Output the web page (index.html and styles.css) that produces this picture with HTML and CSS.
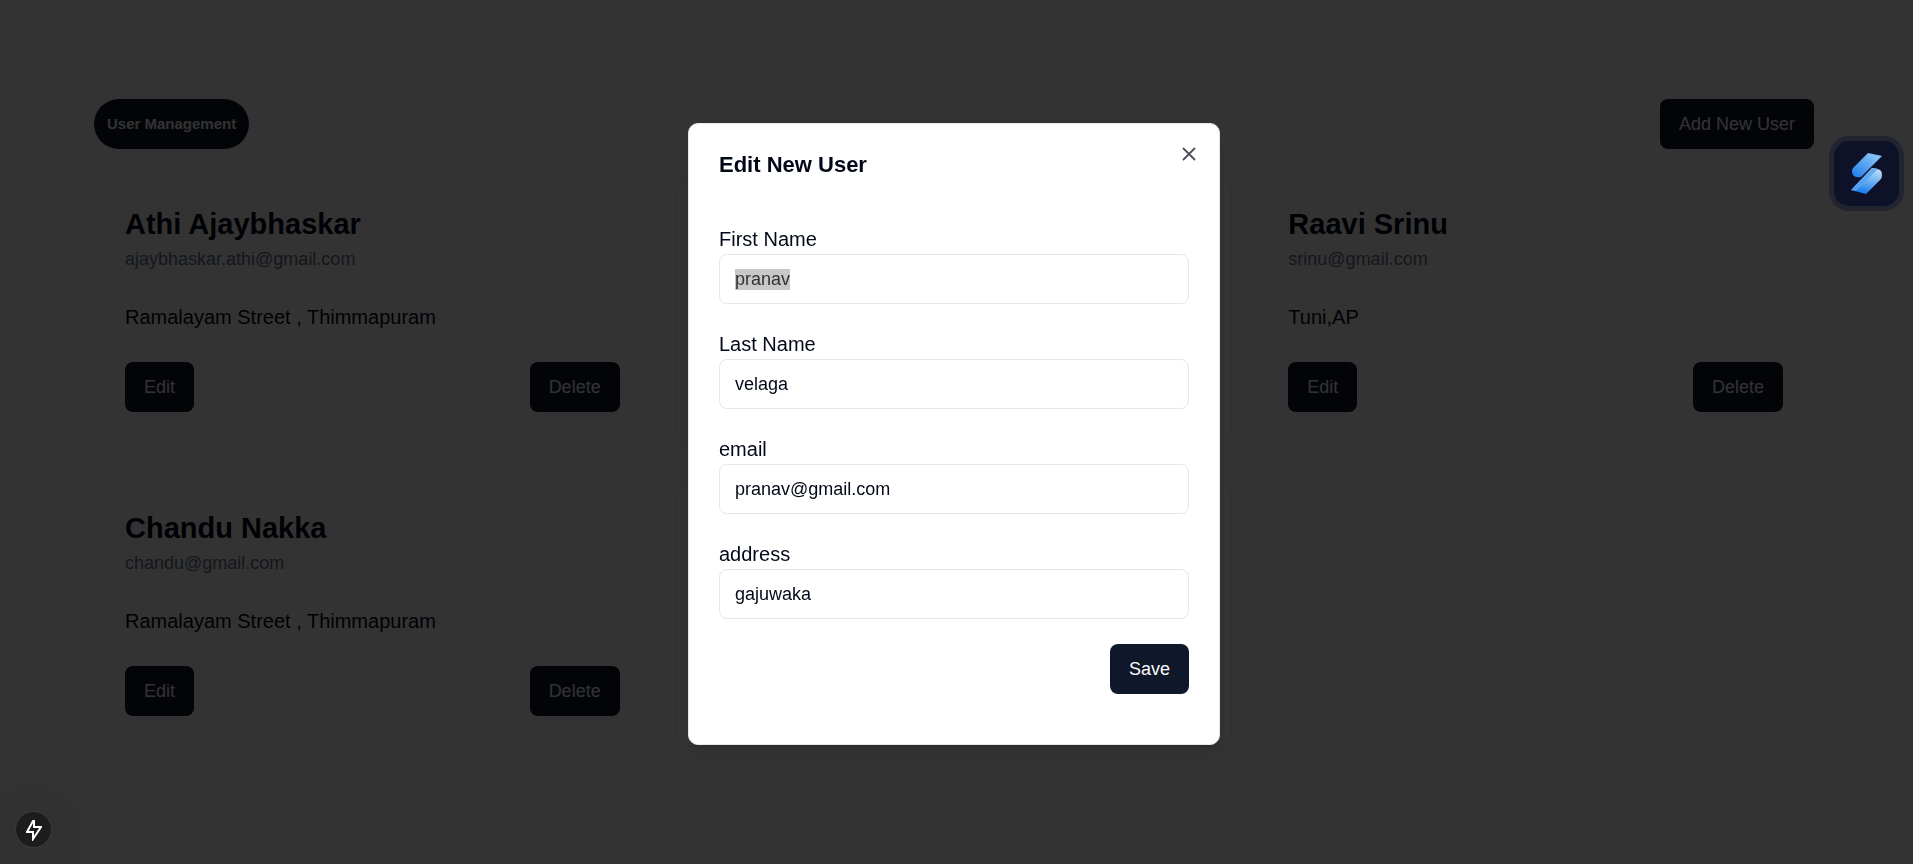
FILE: index.html
```html
<!DOCTYPE html>
<html lang="en">
<head>
<meta charset="utf-8">
<meta name="viewport" content="width=device-width, initial-scale=1">
<title>User Management</title>
<link rel="stylesheet" href="styles.css">
</head>
<body>
<main class="page">
  <header class="page-header">
    <h1 class="badge">User Management</h1>
    <button class="button" type="button">Add New User</button>
  </header>
  <section class="cards">
    <article class="card">
      <h2 class="card-title">Athi Ajaybhaskar</h2>
      <p class="card-email">ajaybhaskar.athi@gmail.com</p>
      <p class="card-address">Ramalayam Street , Thimmapuram</p>
      <div class="card-actions"><button class="button" type="button">Edit</button><button class="button" type="button">Delete</button></div>
    </article>
    <article class="card"></article>
    <article class="card">
      <h2 class="card-title">Raavi Srinu</h2>
      <p class="card-email">srinu@gmail.com</p>
      <p class="card-address">Tuni,AP</p>
      <div class="card-actions"><button class="button" type="button">Edit</button><button class="button" type="button">Delete</button></div>
    </article>
    <article class="card">
      <h2 class="card-title">Chandu Nakka</h2>
      <p class="card-email">chandu@gmail.com</p>
      <p class="card-address">Ramalayam Street , Thimmapuram</p>
      <div class="card-actions"><button class="button" type="button">Edit</button><button class="button" type="button">Delete</button></div>
    </article>
    <article class="card"></article>
  </section>
</main>

<div class="overlay">
  <form class="dialog" role="dialog" aria-modal="true" aria-labelledby="dialog-title">
    <button class="dialog-close" type="button" aria-label="Close">
      <svg viewBox="0 0 24 24" width="22" height="22" fill="none" stroke="currentColor" stroke-width="2" stroke-linecap="round" stroke-linejoin="round"><path d="M18 6 6 18M6 6l12 12"/></svg>
    </button>
    <h2 class="dialog-title" id="dialog-title">Edit New User</h2>
    <div class="fields">
      <div class="field"><label for="first-name">First Name</label><input id="first-name" type="text" value="pranav"></div>
      <div class="field"><label for="last-name">Last Name</label><input id="last-name" type="text" value="velaga"></div>
      <div class="field"><label for="email">email</label><input id="email" type="text" value="pranav@gmail.com"></div>
      <div class="field"><label for="address">address</label><input id="address" type="text" value="gajuwaka"></div>
    </div>
    <div class="dialog-footer"><button class="button" type="submit">Save</button></div>
  </form>
</div>

<button class="assistant" type="button" aria-label="Open assistant">
  <svg viewBox="0 0 32 42" width="32" height="42">
    <defs>
      <linearGradient id="top" x1="1" y1="0" x2="0" y2="1"><stop offset="0" stop-color="#9bd0fb"/><stop offset="1" stop-color="#1b7bea"/></linearGradient>
      <linearGradient id="bottom" x1="0.8" y1="0" x2="0.5" y2="1"><stop offset="0" stop-color="#c5e4fc"/><stop offset="1" stop-color="#187cec"/></linearGradient>
      <linearGradient id="fold" x1="1" y1="0" x2="0" y2="1"><stop offset="0" stop-color="#6fb2f2"/><stop offset="1" stop-color="#4b98ee"/></linearGradient>
    </defs>
    <path fill="url(#top)" d="M17 0 31 3 10 24Q4 25 2 22 0 18 2 15Z"/>
    <path fill="url(#bottom)" d="M21 15Q29 16 30 18 32 22 30 26L15 41 0 37Z"/>
    <path fill="url(#fold)" d="M21 15 27 16 5 38 0 37Z"/>
  </svg>
</button>

<button class="devtools" type="button" aria-label="Open developer tools">
  <svg viewBox="0 0 16 22" width="16" height="22" fill="none" stroke="#fff" stroke-width="2"><path d="M7 2 1 13H7V20L15 8H8V2Z"/></svg>
</button>
<script src="script.js"></script>
</body>
</html>
```
FILE: styles.css
```css
* { box-sizing: border-box; }

body {
  margin: 0;
  padding-right: 5px;
  min-height: 100vh;
  background: #fff;
  color: #020817;
  font-family: "Liberation Sans", Arial, sans-serif;
  font-size: 20px;
  line-height: 30px;
}

h1, h2, p { margin: 0; }

button, input { font: inherit; }

.page { padding: 99px 94px 0; }

.page-header {
  display: flex;
  justify-content: space-between;
  align-items: center;
  margin-bottom: 30px;
}

.badge {
  padding: 10px 13px;
  border-radius: 25px;
  background: #0f172a;
  color: #f8fafc;
  font-size: 15px;
}

.button {
  height: 50px;
  padding: 0 19px;
  border: 0;
  border-radius: 8px;
  background: #0f172a;
  color: #f8fafc;
  font-size: 18px;
}

.cards {
  display: grid;
  grid-template-columns: repeat(3, 1fr);
  gap: 40px 25px;
}

.card {
  padding: 29px 30px 30px;
  border: 1px solid #e2e8f0;
  border-radius: 10px;
}

.card-title { font-size: 29px; }

.card-email {
  margin-top: 8px;
  color: #64748b;
  font-size: 18px;
  line-height: 25px;
}

.card-address { margin: 30px 0; }

.card-actions {
  display: flex;
  justify-content: space-between;
}

.overlay {
  position: fixed;
  inset: 0;
  display: flex;
  align-items: center;
  justify-content: center;
  padding: 4px 5px 0 0;
  background: rgba(0, 0, 0, 0.8);
}

.dialog {
  position: relative;
  width: 100%;
  max-width: 532px;
  padding: 29px 30px 50px;
  border: 1px solid #e2e8f0;
  border-radius: 10px;
  background: #fff;
  box-shadow: 0 12px 19px -4px rgba(0, 0, 0, 0.1), 0 5px 8px -5px rgba(0, 0, 0, 0.1);
}

.dialog-title {
  font-size: 22px;
  line-height: 23px;
}

.dialog-close {
  position: absolute;
  top: 19px;
  right: 19px;
  display: flex;
  padding: 0;
  border: 0;
  background: none;
  color: #020817;
  opacity: 0.7;
}

.fields {
  display: grid;
  gap: 25px;
  margin: 48px 0 25px;
}

.field { display: grid; }

.field input {
  width: 100%;
  height: 50px;
  padding: 0 15px;
  border: 1px solid #e2e8f0;
  border-radius: 8px;
  outline: 0;
  background: #fff;
  color: #020817;
  font-size: 18px;
}

.field input::selection {
  background: #c8c8c8;
  color: #323232;
}

.dialog-footer {
  display: flex;
  justify-content: flex-end;
}

.assistant {
  position: fixed;
  top: 136px;
  right: 9px;
  display: grid;
  place-items: center;
  width: 75px;
  height: 75px;
  padding: 0;
  border: 5px solid #22242f;
  border-radius: 20px;
  background: #0e1229;
}

.devtools {
  position: fixed;
  bottom: 16px;
  left: 15px;
  display: grid;
  place-items: center;
  width: 37px;
  height: 37px;
  padding: 0;
  border: 1px solid #3c3c3c;
  border-radius: 50%;
  background: #1c1c1e;
  box-shadow: 0 5px 40px rgba(0, 0, 0, 0.15);
}
```
FILE: script.js
```js
document.getElementById("first-name").select();
```
